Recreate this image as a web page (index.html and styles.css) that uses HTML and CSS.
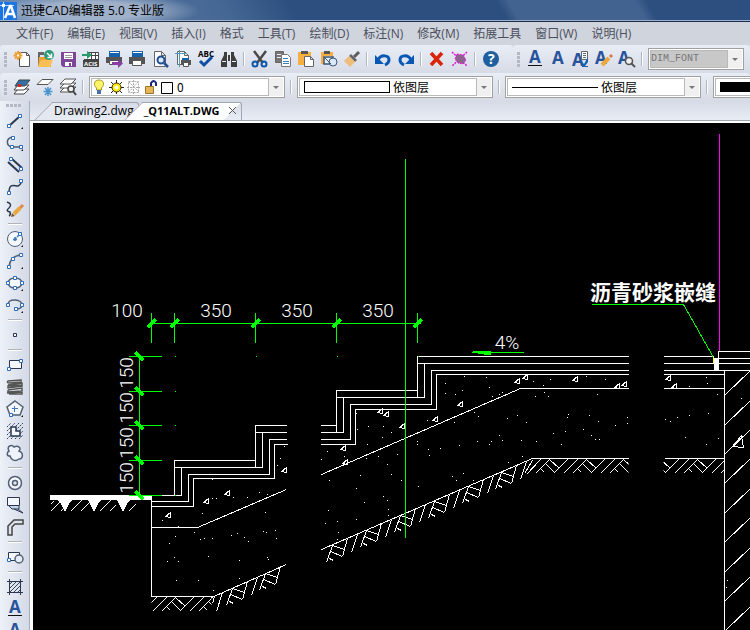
FILE: index.html
```html
<!DOCTYPE html>
<html lang="zh-CN">
<head>
<meta charset="utf-8">
<title>迅捷CAD编辑器 5.0 专业版</title>
<link rel="stylesheet" href="styles.css">
</head>
<body>
<header class="titlebar">
  <svg class="app-icon" viewBox="0 0 17 18" aria-hidden="true"><path fill="#1c74e0" d="M0 0h17v18H0z"/><path fill="none" stroke="#b9dcff" d="M3.500 0v18M0 3.500h14"/><path fill="none" stroke="#fff" stroke-width="2.500" d="M5 16 10 4h1l4 12M7 12h7"/><path fill="#fff" d="M2 2h3v3H2z"/></svg>
  <h1>迅捷CAD编辑器 5.0 专业版</h1>
</header>
<nav class="menu">
  <button>文件(F)</button><button>编辑(E)</button><button>视图(V)</button><button>插入(I)</button><button>格式</button><button>工具(T)</button><button>绘制(D)</button><button>标注(N)</button><button>修改(M)</button><button>拓展工具</button><button>窗口(W)</button><button>说明(H)</button>
</nav>
<div class="toolrow">
  <div class="toolbar standard">
    <span class="grip"></span>
    <button aria-label="新建"><svg viewBox="0 0 20 20"><path fill="#fff" stroke="#555" d="M7.500 3.500h7l3 3v11h-10z"/><path fill="none" stroke="#555" d="M14.500 3.500v3h3"/><path stroke="#eca237" stroke-width="2" d="M6 2v9M1.500 6.500h9M3 3.500l6 6M9 3.500l-6 6"/><path fill="#fff" d="M5 5.500h2v2H5z"/></svg></button>
    <button aria-label="打开"><svg viewBox="0 0 20 20"><path fill="#666" d="M3 3h6v3H5v10H3z"/><path fill="#eca237" d="M4 8h7l5 3v7H3z"/><path fill="#fbc055" d="m3 18 3-7h12l-3 7z"/><circle cx="14" cy="6" r="5" fill="#2b9a77"/><path fill="none" stroke="#fff" stroke-width="1.500" d="m12 4 4 4M16.500 4.500v4h-4"/></svg></button>
    <button aria-label="保存"><svg viewBox="0 0 20 20"><path fill="#7d4697" d="M3 3h15v15H5l-2-2z"/><path fill="#fff" d="M6 4h9v6H6zM7 13h7v4H7z"/><path stroke="#999" d="M7 6.500h7M7 8.500h7"/><path fill="#7d4697" d="M11 14h2v3h-2z"/></svg></button>
    <button aria-label="导入ACIS"><svg viewBox="0 0 20 20"><path fill="#fff" stroke="#444" d="M6.500 3.500h11v14h-14V11M10.500 3v7M14.500 3v7M7 6.500h11M3 10.500h14"/><path fill="#444" d="M2 11h16v7H2z"/><text x="3" y="17" font-size="6" font-weight="700" fill="#fff">ACIS</text><path fill="#2b9a6b" d="M1 5h5V2l5 4-5 4V7H1z"/></svg></button>
    <button aria-label="批量打印"><svg viewBox="0 0 20 20"><path fill="#1762ad" d="M5 2h11v6H5z"/><path fill="#fff" d="M6 3h9v1H6z"/><path fill="#555" d="M2 8h16v6H2z"/><path fill="#fff" stroke="#555" d="M5.500 11.500h9v4h-9z"/><path fill="#8a3fa0" d="M8 13h6v-3l5 4.500-5 4.500v-3H8z"/></svg></button>
    <button aria-label="打印"><svg viewBox="0 0 20 20"><path fill="#1762ad" d="M5 2h11v6H5z"/><path fill="#fff" d="M6 3h9v1H6z"/><path fill="#555" d="M2 8h16v7H2z"/><path fill="#fff" stroke="#555" d="M5.500 11.500h9v5h-9z"/></svg></button>
    <button aria-label="打印预览"><svg viewBox="0 0 20 20"><path fill="#fff" stroke="#666" d="M4.500 2.500h7l4 4v11h-11zM11.500 2.500v4h4"/><circle cx="11" cy="11" r="3.500" fill="#dceaf8" stroke="#214f91" stroke-width="2"/><path stroke="#214f91" stroke-width="2.500" d="m14 14 4 4"/></svg></button>
    <button aria-label="页面设置"><svg viewBox="0 0 20 20"><path fill="#fff" stroke="#666" d="M4.500 2.500h7l4 4v9h-11zM11.500 2.500v4h4"/><path stroke="#4b9cb7" d="M6.500 1v17M2 4.500h12"/><path fill="#1762ad" d="M9 9h7v3H9z"/><path fill="#555" d="M8 11h10v5H8z"/><path fill="#fff" stroke="#555" d="M10.500 13.500h5v4h-5z"/></svg></button>
    <button aria-label="拼写检查"><svg viewBox="0 0 20 20"><text x="2" y="8" font-size="8" font-weight="700">ABC</text><path fill="none" stroke="#0e4da2" stroke-width="3" d="m4 12 4 4 8-8"/></svg></button>
    <button aria-label="查找"><svg viewBox="0 0 20 20"><path fill="#3e3e3e" d="M5 3h3v3h4V3h3v3l3 6v6h-6v-6H8v6H2v-6l3-6z"/><path stroke="#eee" d="M8.500 6v6M11.500 6v6M3 12.500h4M13 12.500h4"/></svg></button>
    <span class="sep"></span>
    <button aria-label="剪切"><svg viewBox="0 0 20 20"><path stroke="#4a4a4a" stroke-width="2.500" d="m4 2 9 12M16 2 7 14"/><circle cx="5" cy="15" r="2.500" fill="none" stroke="#0e57a8" stroke-width="2"/><circle cx="14" cy="15" r="2.500" fill="none" stroke="#0e57a8" stroke-width="2"/></svg></button>
    <button aria-label="复制"><svg viewBox="0 0 20 20"><path fill="#777" stroke="#666" d="M2.500 2.500h8v11h-8z"/><path stroke="#eee" d="M4 5.500h5M4 8.500h5"/><path fill="#fff" stroke="#777" d="M8.500 5.500h6l3 3v9h-9z"/><path stroke="#3680be" d="M10 9.500h5M10 12.500h6M10 14.500h6"/></svg></button>
    <button aria-label="粘贴"><svg viewBox="0 0 20 20"><path fill="#f5af42" d="M2 3h13v13H2z"/><path fill="#555" d="M5 2h7v3H5z"/><path fill="#fff" stroke="#666" d="M8.500 7.500h6l3 3v7h-9zM14.500 7.500v3h3"/></svg></button>
    <button aria-label="粘贴为块"><svg viewBox="0 0 20 20"><path fill="#f5af42" d="M2 3h12v12H2z"/><path fill="#555" d="M5 2h6v3H5z"/><path fill="#fff" d="M5 7h7v6H5z"/><path fill="#e8f1fa" stroke="#3b5778" stroke-width="1.500" d="M5 8h9v7H5z"/><circle cx="14" cy="13" r="4" fill="#dce9f7" stroke="#3b5778"/><path stroke="#3b5778" d="m5 8 7 7"/></svg></button>
    <button aria-label="特性匹配"><svg viewBox="0 0 20 20"><path stroke="#5c5c5c" stroke-width="3" d="m12 8 5-5"/><path fill="#666" d="m9 5 6 6-2 2-6-6z"/><path fill="#edbd7b" d="m7 7 6 6-5 5-6-6z"/></svg></button>
    <span class="sep"></span>
    <button aria-label="撤消"><svg viewBox="0 0 20 20"><path fill="none" stroke="#0758b5" stroke-width="3" d="M5 11c3-6 11-5 11 0 0 3-2 4-4 5"/><path fill="#0758b5" d="M2 6v9h9z"/></svg></button>
    <button aria-label="重做"><svg viewBox="0 0 20 20"><path fill="none" stroke="#0758b5" stroke-width="3" d="M15 11C12 5 4 6 4 11c0 3 2 4 4 5"/><path fill="#0758b5" d="M18 6v9H9z"/></svg></button>
    <span class="sep"></span>
    <button aria-label="删除"><svg viewBox="0 0 20 20"><path stroke="#d92506" stroke-width="3.500" d="m4 4 11 12M15 4 4 16"/></svg></button>
    <button aria-label="清理"><svg viewBox="0 0 20 20"><path stroke="#e418dc" stroke-width="1.500" stroke-dasharray="2 1" d="m2 3 15 14M17 3 2 17"/><path fill="#8d658c" stroke="#e418dc" stroke-dasharray="2 1" d="m7 5 6 1 3 5-3 4-5-1-3-4z"/></svg></button>
    <span class="sep"></span>
    <button aria-label="帮助"><svg viewBox="0 0 20 20"><circle cx="10" cy="10" r="8" fill="#205f9e"/><text x="7" y="15" font-size="14" font-weight="700" fill="#fff">?</text></svg></button>
  </div>
  <div class="toolbar text-tools">
    <span class="grip"></span>
    <button aria-label="多行文字"><svg viewBox="0 0 20 20"><text class="letter" x="4" y="14">A</text><path stroke="#111" d="M3 16.500h14"/></svg></button>
    <button aria-label="单行文字"><svg viewBox="0 0 20 20"><text class="letter" x="4" y="15">A</text></svg></button>
    <button aria-label="文字替换"><svg viewBox="0 0 20 20"><text class="letter" x="1" y="17">A</text><path fill="#fff" stroke="#666" d="M10.500 2.500h6v8h-6z"/><path stroke="#666" d="M12 4.500h3M12 6.500h3M12 8.500h3"/><path fill="#1762ad" d="M17 8v5l-3 4h3v1h-6v-5l2 2z"/></svg></button>
    <button aria-label="编辑文字"><svg viewBox="0 0 20 20"><text class="letter" x="1" y="15">A</text><path stroke="#eda73b" stroke-width="4" d="m8 16 7-7"/><path stroke="#d57a46" stroke-width="3" d="m16 8 2-2"/></svg></button>
    <button aria-label="查找文字"><svg viewBox="0 0 20 20"><text class="letter" x="1" y="15">A</text><circle cx="12" cy="12" r="3.500" fill="#eee" stroke="#555" stroke-width="1.500"/><path stroke="#555" stroke-width="2" d="m14 14 4 4"/></svg></button>
    <span class="sep"></span>
    <div class="combo small disabled"><div class="field"><select aria-label="文字样式"><option>DIM_FONT</option></select></div><span class="arrow"></span></div>
  </div>
</div>
<div class="toolrow layers">
  <div class="toolbar">
    <span class="grip"></span>
    <button aria-label="图层"><svg viewBox="0 0 20 20"><g fill="#fff" stroke="#444"><path d="m6 12-4 5h10l5-5z"/><path d="m6 8-4 5h10l5-5z"/></g><path fill="#3270a8" stroke="#444" d="m7 3-4 6h10l5-6z"/><path fill="#e32414" d="M6 7h3v3H6z"/></svg></button>
    <button aria-label="图层冻结"><svg viewBox="0 0 20 20"><path fill="#fff" stroke="#555" d="M7 2.500 2 7.500h11l5-5z"/><path stroke="#4b96cd" stroke-width="1.500" d="M13 10v9M8.500 14.500h9M10 11l6 7M16 11l-6 7"/></svg></button>
    <button aria-label="图层查找"><svg viewBox="0 0 20 20"><g fill="#fff" stroke="#555"><path d="m7 10-5 5h11l5-5z"/><path d="M7 6 2 11h11l5-5z"/><path d="M7 2 2 7h11l5-5z"/></g><circle cx="13" cy="12" r="3" fill="#eee" stroke="#444" stroke-width="1.500"/><path stroke="#444" stroke-width="2" d="m15 14 3 4"/></svg></button>
    <span class="sep"></span>
    <div class="combo"><div class="field">
      <svg class="layer-state" viewBox="0 0 82 18" aria-hidden="true"><path fill="#fff36a" stroke="#a59a2c" d="M4.500 10C1 7 2 2 7 2s6 5 2.500 8v2h-5z"/><path fill="#4871a6" d="M5 12h4v4H5z"/><path stroke="#222" d="M24.500 2v14M17 9.500h15M19 4l11 11M30 4 19 15"/><circle cx="24.500" cy="9.500" r="4.500" fill="#ffec00" stroke="#332f00"/><circle cx="24.500" cy="9.500" r="2" fill="#fff"/><path fill="none" stroke="#aaa" stroke-dasharray="2 1" d="M36.500 3.500h10v11h-10zM41.500 2v14M35 9.500h13M37 4l10 10M46 4 37 14"/><path fill="#e7b657" stroke="#9c7330" d="M53.500 8.500h8v7h-8z"/><path fill="none" stroke="#1b2380" stroke-width="2" d="M59 8V5q3-4 5 0v3"/><path fill="#fff" stroke="#000" d="M69.500 4.500h11v11h-11z"/></svg>
      <select aria-label="当前图层"><option>0</option></select></div><span class="arrow"></span></div>
    <span class="sep"></span>
    <div class="combo"><div class="field"><span class="color-sample"></span><select aria-label="颜色"><option>依图层</option></select></div><span class="arrow"></span></div>
    <span class="sep"></span>
    <div class="combo"><div class="field"><span class="line-sample"></span><select aria-label="线型"><option>依图层</option></select></div><span class="arrow"></span></div>
    <span class="sep"></span>
    <div class="combo last"><div class="field"><span class="weight-sample"></span></div></div>
  </div>
</div>
<div class="workspace">
  <aside class="palette">
    <span class="grip-h"></span>
    <button class="more" aria-label="直线"><svg viewBox="0 0 20 20"><path stroke="#2b3850" stroke-width="2" d="M4 15 15 5"/><path class="node" d="M2.500 13.500h3v3h-3zM13.500 3.500h3v3h-3z"/></svg></button>
    <button class="more" aria-label="多段线"><svg viewBox="0 0 20 20"><path fill="none" stroke="#4e5c70" stroke-width="1.500" d="M8 4C0 5 1 14 8 14h8"/><path class="node" d="M6.500 3.500h3v3h-3zM5.500 12.500h3v3h-3zM14.500 12.500h3v3h-3z"/></svg></button>
    <button aria-label="双线"><svg viewBox="0 0 20 20"><path stroke="#2b3850" stroke-width="2" d="m3 7 11 10M7 4l10 9"/><path class="node" d="M4.500 2.500h3v3h-3zM14.500 12.500h3v3h-3z"/></svg></button>
    <button aria-label="样条曲线"><svg viewBox="0 0 20 20"><path fill="none" stroke="#2b3850" stroke-width="1.500" d="M4 16C4 4 11 10 13 9q4-2 3-6"/><path class="node" d="M2.500 14.500h3v3h-3zM14.500 2.500h3v3h-3z"/></svg></button>
    <button aria-label="徒手画线"><svg viewBox="0 0 20 20"><path fill="none" stroke="#2b3850" stroke-width="1.500" d="M2 3q6 2 2 6-4 3 1 4 1 3-1 4"/><path stroke="#e9a641" stroke-width="4" d="m9 15 6-6"/><path stroke="#e18945" stroke-width="3" d="m15 9 3-3"/><path fill="#7a5b33" d="m6 18 1-4 3 3z"/></svg></button>
    <span class="sep-h"></span>
    <button class="more" aria-label="圆"><svg viewBox="0 0 20 20"><circle cx="10" cy="10" r="7.500" fill="#f4f7fb" stroke="#536174"/><path stroke="#3c78ba" stroke-width="1.500" stroke-dasharray="2 1" d="m10 10 5-5"/><path stroke="#3c78ba" stroke-width="1.500" d="M8 10.500h4M10 8v4"/><path class="node" d="M13.500 3.500h3v3h-3z"/></svg></button>
    <button class="more" aria-label="圆弧"><svg viewBox="0 0 20 20"><path fill="none" stroke="#536174" stroke-width="1.500" d="M4 16Q5 5 16 4"/><path class="node" d="M2.500 14.500h3v3h-3zM6.500 6.500h3v3h-3zM14.500 2.500h3v3h-3z"/></svg></button>
    <button class="more" aria-label="椭圆"><svg viewBox="0 0 20 20"><ellipse cx="10" cy="10" rx="7" ry="5" fill="#f4f7fb" stroke="#536174" stroke-width="1.500"/><path class="node" d="M1.500 8.500h3v3h-3zM8.500 3.500h3v3h-3zM15.500 8.500h3v3h-3zM8.500 13.500h3v3h-3z"/></svg></button>
    <button class="more" aria-label="椭圆弧"><svg viewBox="0 0 20 20"><path fill="none" stroke="#536174" stroke-width="1.500" d="M3 9c1-6 14-5 14 1 0 3-3 4-6 4"/><path class="node" d="M1.500 8.500h3v3h-3zM15.500 8.500h3v3h-3zM9.500 12.500h3v3h-3z"/></svg></button>
    <span class="sep-h"></span>
    <button aria-label="点"><svg viewBox="0 0 20 20"><path fill="#fff" stroke="#2b3850" d="M8.500 8.500h3v3h-3z"/></svg></button>
    <span class="sep-h"></span>
    <button aria-label="矩形"><svg viewBox="0 0 20 20"><path fill="#f4f7fb" stroke="#2b3850" d="M4.500 5.500h12v8h-12z"/><path class="node" d="M2.500 12.500h3v3h-3zM14.500 4.500h3v3h-3z"/></svg></button>
    <button aria-label="擦除"><svg viewBox="0 0 20 20"><path fill="none" stroke="#555" stroke-width="1.500" d="m17 3-14 1q-2 2 2 2l12-1M3 8l14-2v3L3 11v-2l14-1M3 13l14-2v3L3 15v-2M2 16l15-1v2H4"/></svg></button>
    <button class="more" aria-label="多边形"><svg viewBox="0 0 20 20"><path fill="#f4f7fb" stroke="#536174" stroke-width="1.500" d="m10 2 8 6-3 8H5L2 8z"/><path stroke="#3c78ba" d="M7 9.500h6M9.500 7v6"/><path class="node" d="M4.500 14.500h3v3h-3z"/></svg></button>
    <button aria-label="面域"><svg viewBox="0 0 20 20"><path stroke="#35465d" stroke-dasharray="2 1" d="m2 6 4-4M2 10l8-8M2 14l12-12M2 18 18 2M6 18 18 6M10 18l8-8M14 18l4-4"/><path fill="#f7f9fc" stroke="#2b3850" stroke-width="1.500" d="M6 6h5v4h4v5H6z"/></svg></button>
    <button aria-label="修订云线"><svg viewBox="0 0 20 20"><path fill="#eef3fb" stroke="#536174" stroke-width="1.500" d="M5 13c-4 0-3-4-1-5-3-5 3-7 5-4 4-2 8 1 5 4 5 2 4 8 0 8-4 3-8 1-9-3z"/></svg></button>
    <span class="sep-h"></span>
    <button aria-label="圆环"><svg viewBox="0 0 20 20"><circle cx="10" cy="10" r="6.500" fill="#f4f7fb" stroke="#536174" stroke-width="1.500"/><circle cx="10" cy="10" r="2.500" fill="#e1e7f0" stroke="#536174" stroke-width="1.500"/></svg></button>
    <button aria-label="区域覆盖"><svg viewBox="0 0 20 20"><path fill="#f4f7fb" stroke="#2b3850" d="M2.500 2.500h12v8h-12z"/><path fill="#c4d5e9" stroke="#2b3850" d="m4 11 3 3h7v-3M9 14l9 4-5-4"/></svg></button>
    <button aria-label="弯管"><svg viewBox="0 0 20 20"><path fill="#dce4ef" stroke="#444" stroke-width="1.500" d="M3 18v-9l6-6h9v4h-8l-3 3v8z"/></svg></button>
    <span class="sep-h"></span>
    <button aria-label="创建块"><svg viewBox="0 0 20 20"><path fill="#f4f7fb" stroke="#2b3850" d="M3.500 5.500h11v8h-11z"/><circle cx="14" cy="12" r="4" fill="#e4edf8" stroke="#536174" stroke-width="1.500"/><path class="node" d="M2.500 11.500h3v3h-3z"/></svg></button>
    <span class="sep-h"></span>
    <button aria-label="图案填充"><svg viewBox="0 0 20 20"><path stroke="#35465d" d="m4 8 4-4M4 12l8-8M4 16 16 4M8 16l8-8M12 16l4-4"/><path fill="none" stroke="#2b3850" d="M4.500 2v16M15.500 2v16M2 4.500h16M2 15.500h16"/></svg></button>
    <button aria-label="多行文字"><svg viewBox="0 0 20 20"><text class="letter" x="4" y="14">A</text><path stroke="#111" d="M3 16.500h14"/></svg></button>
    <button aria-label="单行文字"><svg viewBox="0 0 20 20"><text class="letter" x="4" y="15">A</text></svg></button>
  </aside>
  <main class="document">
    <div class="tabs">
      <button class="tab">Drawing2.dwg</button>
      <button class="tab active">_Q11ALT.DWG<svg class="close" viewBox="0 0 9 9" aria-hidden="true"><path stroke="#555" d="m1 1 7 7M8 1 1 8"/></svg></button>
    </div>
    <div class="canvas">
      <svg class="drawing" viewBox="33 123 717 507" preserveAspectRatio="xMinYMin slice" role="img" aria-label="台阶剖面图">
        <defs>
          <g id="slope"><path d="M0 0-6 17M-3 13l4 2M0 0l12 4M-2 6l12 5M15-7l-5 18"/></g>
          <g id="slope-full"><use href="#slope"/><path d="m25-11-6 18"/></g>
          <g id="flat"><path d="m0 0-14 14M0 0l10 9M-4 4l9 9M-9 9l4 4M18 0 4 14M28 0 14 14"/></g>
          <path id="chip" d="m-3 1 5-4v5zM-3 1l3-1"/>
          <path id="tick" stroke-width="3" d="m-4 4 8-8"/>
          <path id="tick-v" stroke-width="3" d="m-4-4 8 8"/>
          <clipPath id="c1"><path d="M151 590h60v30h-60z"/></clipPath>
          <clipPath id="c2"><path d="M526 450h102v30H526z"/></clipPath>
          <clipPath id="c3"><path d="M663 450h61v30h-61z"/></clipPath>
        </defs>
        <g class="white" transform="translate(.5 .5)">
          <path d="M151 495v101h60M151 527h46l89-38M151 495h30M174 495v-35h81v-35h31M174 467h88v-35M181 495v-28M255 460v7M255 432h31M151 501h37v-27h81v-35h17M151 506h42v-28h81v-34h13"/>
          <path d="M320 425h16v-35h81v-34h211M320 432h23v-35h81v-34h204M336 425v7M417 390v7M336 397h7M417 363h7M320 439h30v-35h81v-34h197M320 444h35v-35h81v-35h192M628 388H520l-199 86M628 458h-96l-211 91M286 564l-75 33"/>
          <path d="M663 356h50M663 363h50M663 370h87M663 374h61M663 388h61M664 458h60M724 370v260M718 370v-19h32M718 358h32M718 363h32"/>
          <path d="m725 394 25-24M725 424l25-24M725 453l25-24M725 482l25-24M725 512l25-24M725 541l25-24M725 571l25-24M725 600l25-24M725 630l25-24M732 446l9-11 2 12z"/>
          <path d="m50 511 11-11M50 504l3-3M60 511l6-6M70 511l11-11M80 511l11-11M99 511l11-11M109 511l6-6M128 511l7-7M222 592l-6 19M214 596l-2 7M540 459l-14 15M532 460l-8 13"/>
          <use href="#slope-full" x="232" y="588"/><use href="#slope" x="265" y="573"/>
          <use href="#slope-full" x="332" y="545"/><use href="#slope-full" x="366" y="530"/><use href="#slope-full" x="400" y="515"/><use href="#slope-full" x="434" y="501"/><use href="#slope-full" x="468" y="486"/><use href="#slope-full" x="501" y="472"/>
          <g clip-path="url(#c1)"><use href="#flat" x="138" y="597"/><use href="#flat" x="175" y="597"/><use href="#flat" x="212" y="597"/></g>
          <g clip-path="url(#c2)"><use href="#flat" x="549" y="459"/><use href="#flat" x="586" y="459"/><use href="#flat" x="623" y="459"/></g>
          <g clip-path="url(#c3)"><use href="#flat" x="660" y="459"/><use href="#flat" x="697" y="459"/><use href="#flat" x="734" y="459"/></g>
          <use href="#chip" x="168" y="515"/><use href="#chip" x="206" y="501"/><use href="#chip" x="227" y="493"/><use href="#chip" x="284" y="470"/><use href="#chip" x="380" y="411"/><use href="#chip" x="386" y="414"/><use href="#chip" x="402" y="426"/><use href="#chip" x="435" y="419"/><use href="#chip" x="460" y="404"/><use href="#chip" x="517" y="381"/><use href="#chip" x="525" y="377"/><use href="#chip" x="575" y="379"/><use href="#chip" x="624" y="384"/><use href="#chip" x="617" y="386"/><use href="#chip" x="668" y="378"/><use href="#chip" x="674" y="386"/><use href="#chip" x="343" y="448"/><use href="#chip" x="345" y="462"/>
        </g>
        <path class="solid" d="M50 495h102v5H130l-3 4-4 8-4-8-2-4h-16l-3 4-4 8-4-8-2-4H72l-3 4-4 8-4-8-3-4H50zM714 358h5v13h-5z"/>
        <path class="dots" d="M212 479.500h1M212 498.500h1M216 498.500h1M233 497.500h1M247 497.500h1M259 492.500h1M267 494.500h1M202 513.500h1M162 520.500h1M178 526.500h1M265 512.500h1M194 532.500h1M175 536.500h1M169 543.500h1M200 539.500h1M204 538.500h1M212 538.500h1M231 535.500h1M237 533.500h1M244 537.500h1M248 541.500h1M263 531.500h1M266 532.500h1M275 530.500h1M276 538.500h1M174 557.500h1M167 561.500h1M178 561.500h1M208 556.500h1M239 560.500h1M267 557.500h1M268 559.500h1M176 580.500h1M198 580.500h1M239 578.500h1M213 590.500h1M280 458.500h1M277 465.500h1M284 446.500h1"/>
        <path class="dots" d="M464 376.500h1M486 377.500h1M445 383.500h1M462 390.500h1M445 393.500h1M455 394.500h1M489 387.500h1M492 396.500h1M499 394.500h1M502 392.500h1M427 420.500h1M454 422.500h1M474 412.500h1M478 416.500h1M507 418.500h1M517 415.500h1M356 413.500h1M368 426.500h1M383 426.500h1M391 432.500h1M382 437.500h1M357 429.500h1M367 444.500h1M417 441.500h1M417 444.500h1M499 435.500h1M477 441.500h1M491 441.500h1M489 444.500h1M459 445.500h1M502 440.500h1M521 440.500h1M440 448.500h1M428 449.500h1"/>
        <path class="dots" d="M327 451.500h1M344 456.500h1M321 459.500h1M366 458.500h1M378 456.500h1M397 454.500h1M387 464.500h1M391 474.500h1M360 475.500h1M329 480.500h1M401 480.500h1M356 488.500h1M418 486.500h1M364 502.500h1M383 496.500h1M387 500.500h1M328 510.500h1M388 509.500h1M388 515.500h1M356 519.500h1M337 521.500h1M325 523.500h1M338 532.500h1M337 539.500h1M429 455.500h1M452 476.500h1M456 480.500h1M463 473.500h1M473 480.500h1M508 462.500h1M526 422.500h1M536 441.500h1M522 456.500h1"/>
        <path class="dots" d="M550 379.500h1M533 381.500h1M543 385.500h1M605 379.500h1M586 376.500h1M597 394.500h1M535 396.500h1M544 392.500h1M548 396.500h1M568 414.500h1M567 417.500h1M589 415.500h1M598 421.500h1M615 425.500h1M627 417.500h1M627 423.500h1M553 433.500h1M565 431.500h1M583 429.500h1M591 435.500h1M595 439.500h1M599 439.500h1M561 444.500h1M706 377.500h1M707 383.500h1M689 386.500h1M717 394.500h1M665 419.500h1M670 421.500h1M677 417.500h1M689 415.500h1M708 413.500h1M685 437.500h1M718 438.500h1M706 444.500h1M741 398.500h1M727 580.500h1M726 587.500h1"/>
        <g class="green" transform="translate(.5 .5)">
          <path d="M405 158v379M151 323h269M151 312v30M174 312v30M255 312v30M336 312v30M417 312v30M139 356v140M128 356h33M128 391h33M128 425h33M128 460h33M128 495h33M591 304h92l30 53M471 352h52M174 356h1M255 356h1M336 356h1M417 356h1M174 391h1M174 425h1M174 495h1"/>
          <use href="#tick" x="151" y="323"/><use href="#tick" x="174" y="323"/><use href="#tick" x="255" y="323"/><use href="#tick" x="336" y="323"/><use href="#tick" x="417" y="323"/>
          <use href="#tick-v" x="139" y="356"/><use href="#tick-v" x="139" y="391"/><use href="#tick-v" x="139" y="425"/><use href="#tick-v" x="139" y="460"/><use href="#tick-v" x="139" y="495"/>
          <path fill="#0f0" stroke="none" d="m472 351 11-1h7v4h-7l-11-2z"/>
        </g>
        <path class="magenta" d="M719.500 134v217"/>
        <path class="yellow" d="M713.500 357v6"/>
        <g class="dim">
          <text x="127" y="317">100</text><text x="216" y="317">350</text><text x="297" y="317">350</text><text x="378" y="317">350</text>
          <text transform="translate(133 373) rotate(-90)">150</text><text transform="translate(133 408) rotate(-90)">150</text><text transform="translate(133 443) rotate(-90)">150</text><text transform="translate(133 478) rotate(-90)">150</text>
          <text x="507" y="349">4%</text>
        </g>
        <text class="note" x="590" y="300">沥青砂浆嵌缝</text>
      </svg>
    </div>
  </main>
</div>
</body>
</html>
```
FILE: styles.css
```css
* { box-sizing: border-box; }

body {
  margin: 0;
  height: 100vh;
  overflow: hidden;
  display: flex;
  flex-direction: column;
  background: #d5dae5;
  font: 12px/16px "Open Sans", "Noto Sans CJK SC", sans-serif;
  color: #000;
}

button {
  border: 0;
  padding: 0;
  background: none;
  font: inherit;
  color: inherit;
}

.titlebar {
  flex: none;
  height: 22px;
  display: flex;
  align-items: center;
  gap: 4px;
  border-bottom: 1px solid #1d2c49;
  box-shadow: inset 0 -1px #9fb3d0;
  background:
    radial-gradient(ellipse 110px 18px at 90px 11px, #9fb0c9 0 50%, transparent 100%),
    linear-gradient(60deg, #6483ad 0, #456793 200px, #2c4f80 260px 440px, #42628f 450px 560px, #2c4f80 570px);
}

.app-icon { width: 17px; height: 18px; flex: none; }

h1 {
  margin: 0;
  font-size: 12px;
  font-weight: 400;
}

.menu {
  flex: none;
  height: 23px;
  display: flex;
  align-items: center;
  gap: 14px;
  padding-left: 16px;
  background: #d0d4dd;
  color: #4a4f5c;
  white-space: nowrap;
}

.menu button { flex: none; }

.toolrow {
  flex: none;
  display: flex;
  height: 28px;
  background: #d5dae5;
}

.toolbar {
  flex: none;
  display: flex;
  align-items: center;
  border-radius: 4px;
  background: linear-gradient(#e9edf6, #d6dbe6);
}

.standard { width: 513px; }
.text-tools { flex: 1; }
.layers .toolbar { flex: 1; min-width: 0; }

.toolbar button {
  flex: none;
  width: 23px;
  height: 22px;
  display: grid;
  place-items: center;
}

button svg { width: 20px; height: 20px; overflow: visible; }

svg text { font-family: "Open Sans", "Liberation Sans", sans-serif; }
.letter { font-size: 17px; font-weight: 700; fill: #27539b; }

.grip {
  flex: none;
  width: 10px;
  height: 15px;
  background: repeating-linear-gradient(#b3b8c2 0 3px, transparent 3px 4px) 4px 0 / 3px 15px no-repeat;
}

.sep {
  flex: none;
  width: 8px;
  height: 14px;
  background: linear-gradient(90deg, transparent 3px, #b0b4bd 3px 4px, #fff 4px 5px, transparent 5px);
}

.combo {
  flex: none;
  width: 196px;
  height: 22px;
  margin: 0 2px;
  padding: 1px;
  display: flex;
  border: 1px solid #a0a0a0;
  background: #fff;
}

.small { width: 96px; }

.last {
  flex: 1;
  min-width: 0;
  margin-right: 0;
  border-right: 0;
  padding-right: 0;
}

.last .field { border-right: 0; }

.field {
  flex: 1;
  min-width: 0;
  display: flex;
  align-items: center;
  gap: 3px;
  border: 1px solid #b9b9b9;
  padding-left: 3px;
}

.field select {
  flex: 1;
  min-width: 0;
  height: 16px;
  appearance: none;
  border: 0;
  padding: 0;
  background: transparent;
  font: 12px/16px "Noto Sans CJK SC", sans-serif;
  color: #000;
}

.arrow {
  width: 14px;
  background: #f0f0f0;
  display: grid;
  place-items: center;
}

.arrow::after {
  content: "";
  border: 3px solid transparent;
  border-top-color: #777;
  border-bottom: 0;
}

.disabled .field { padding-left: 0; background: #c8c8c8; }
.field select[aria-label="文字样式"] { font: 10px/16px "Liberation Mono", monospace; color: #777; }

.layer-state { flex: none; width: 82px; height: 18px; margin-left: -3px; }
.color-sample { flex: none; width: 86px; height: 12px; margin-left: 1px; border: 1px solid #000; }
.line-sample { flex: none; width: 86px; height: 1px; margin-left: 1px; background: #000; }
.weight-sample { flex: 1; height: 10px; margin-left: 1px; background: #000; }

.workspace {
  flex: 1;
  min-height: 0;
  display: flex;
}

.palette {
  flex: none;
  width: 30px;
  padding-top: 3px;
  overflow: hidden;
  border-right: 1px solid #a7afbd;
  background: linear-gradient(90deg, #edf1f8, #d3d9e6);
}

.palette button {
  position: relative;
  width: 30px;
  height: 22px;
  display: grid;
  place-items: center;
}

.more::after {
  content: "";
  position: absolute;
  right: 7px;
  bottom: 3px;
  border: 1px solid #111;
  border-left-color: transparent;
  border-top-color: transparent;
}

.node { fill: #fff; stroke: #2e6dba; }

.grip-h {
  display: block;
  height: 6px;
  background: repeating-linear-gradient(90deg, #b3b8c2 0 3px, transparent 3px 4px) 6px 0 / 15px 3px no-repeat;
}

.sep-h {
  display: block;
  height: 8px;
  margin: 0 7px 0 8px;
  background: linear-gradient(transparent 3px, #adb2bb 3px 4px, #fff 4px 5px, transparent 5px);
}

.document {
  flex: 1;
  min-width: 0;
  display: flex;
  flex-direction: column;
  background: linear-gradient(#d5dae5, #e9edf6 20px);
}

.tabs {
  height: 20px;
  padding: 1px 0 0 22px;
  display: flex;
  overflow: hidden;
  border-bottom: 1px solid #a0a6b2;
}

.tab {
  position: relative;
  z-index: 0;
  height: 18px;
  display: flex;
  align-items: center;
  gap: 8px;
  padding: 0 4px 2px 2px;
  border: 1px solid #a0a6b2;
  border-width: 1px 1px 0 0;
  border-radius: 0 3px 0 0;
}

.tab::before {
  content: "";
  position: absolute;
  z-index: -1;
  left: -9px;
  top: -1px;
  width: 20px;
  height: 18px;
  border: 1px solid #a0a6b2;
  border-width: 1px 0 0 1px;
  background: #e4e8f0;
  transform: skewX(-45deg);
}

.active {
  z-index: 1;
  margin-left: 3px;
  font-size: 11px;
  font-weight: 700;
}

.active::before {
  width: 98px;
  background: #fff;
}

.tab .close { width: 9px; height: 9px; }

.canvas {
  flex: 1;
  min-height: 0;
  border: 0 solid #fff;
  border-width: 2px 0 0 3px;
  background: #000;
}

.drawing {
  display: block;
  width: 100%;
  height: 100%;
  shape-rendering: crispEdges;
}

.white { fill: none; stroke: #fff; }
.green { fill: none; stroke: #0f0; }
.magenta { stroke: #f0f; }
.yellow { stroke: #ff0; }
.dots { stroke: #fff; }
.solid { fill: #fff; }

.dim text {
  font: 300 19px "Roboto", sans-serif;
  fill: #fff;
  text-anchor: middle;
}

.drawing .note {
  font: 700 21px "Noto Sans CJK SC", sans-serif;
  fill: #fff;
}
```
